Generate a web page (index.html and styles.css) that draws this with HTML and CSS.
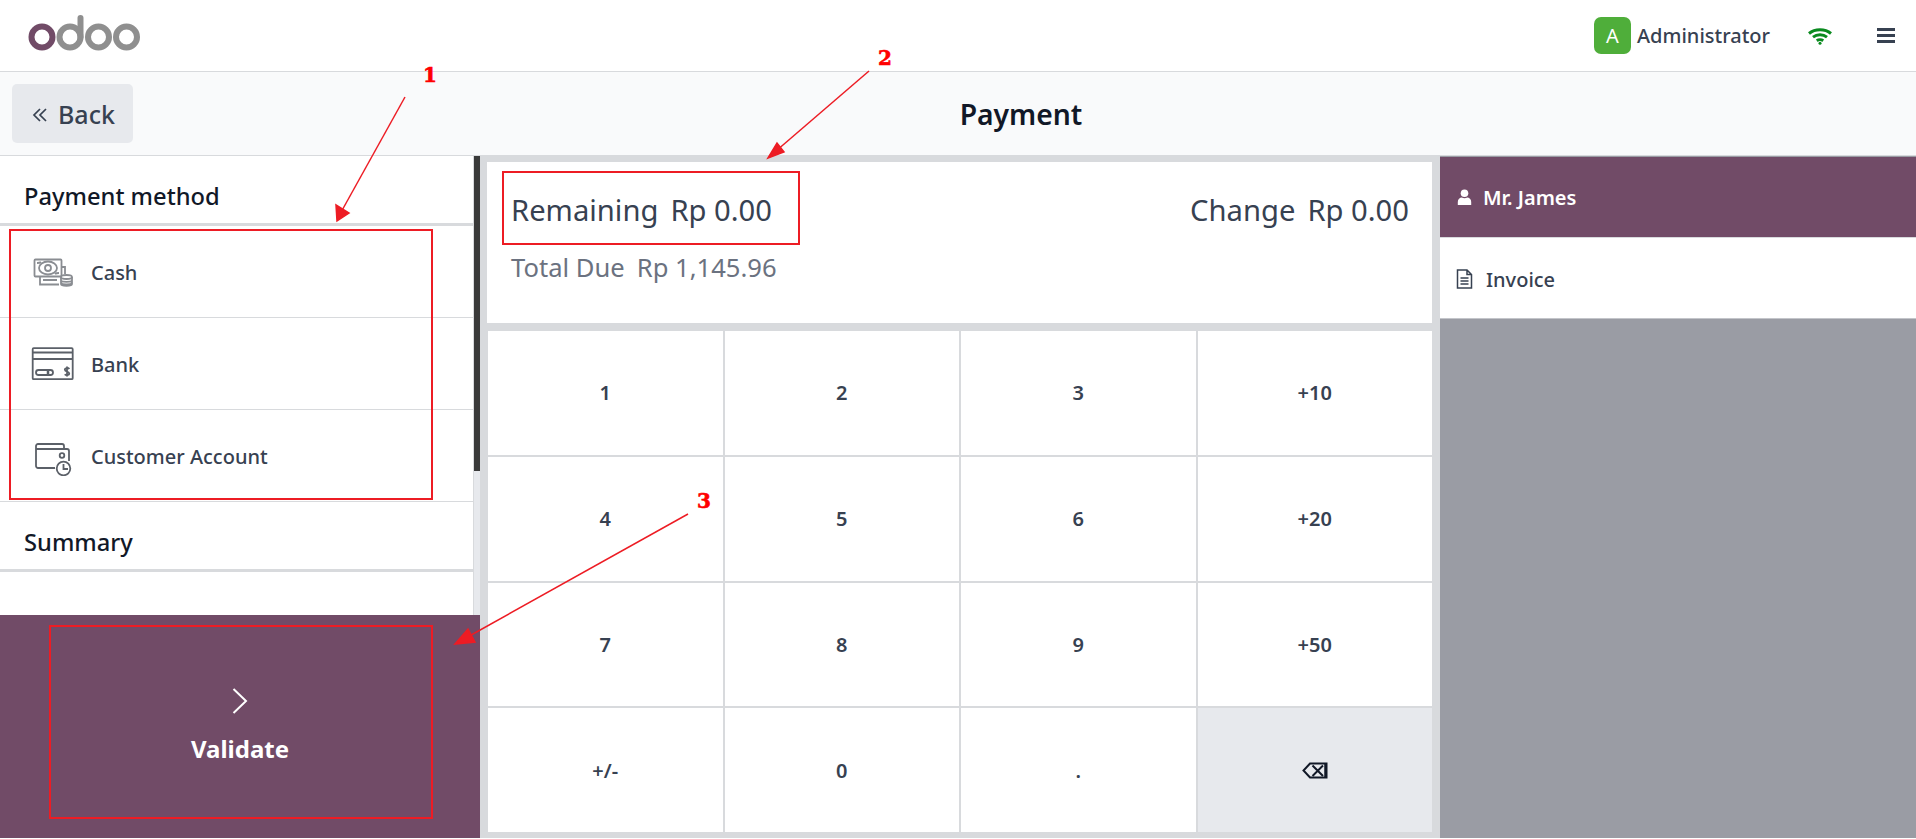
FILE: index.html
```html
<!DOCTYPE html>
<html lang="en">
<head>
<meta charset="utf-8">
<title>Payment</title>
<link rel="stylesheet" href="styles.css">
</head>
<body>
<div class="app">
  <header class="topbar">
    <svg class="logo" width="116" height="38" viewBox="0 0 116 38" fill="none">
      <circle cx="14" cy="22" r="10.5" stroke="#714B67" stroke-width="6"/>
      <circle cx="42" cy="22" r="10.5" stroke="#8f8f8f" stroke-width="6"/>
      <path d="M52.5 3v19" stroke="#8f8f8f" stroke-width="6" stroke-linecap="round"/>
      <circle cx="70.500" cy="22" r="10.500" stroke="#8f8f8f" stroke-width="6"/>
      <circle cx="98.500" cy="22" r="10.500" stroke="#8f8f8f" stroke-width="6"/>
    </svg>
    <div class="top-right">
      <span class="avatar">A</span>
      <span class="user">Administrator</span>
      <svg class="wifi" width="24" height="18" viewBox="0 0 24 18" fill="none" stroke="#0a8a1f" stroke-width="3">
        <path d="M1 6.500C7 1.500 17 1.500 23 6.500"/>
        <path d="M5 10.200C9 7 15 7 19 10.200"/>
        <path d="M8.800 13.800C10.500 12.500 13.500 12.500 15.200 13.800"/>
        <circle cx="12" cy="16.300" r="1.500" fill="#0a8a1f" stroke="none"/>
      </svg>
      <div class="burger"><i></i><i></i><i></i></div>
    </div>
  </header>
  <div class="subbar">
    <button class="back">
      <svg class="back-icon" width="16" height="16" viewBox="0 0 16 16" fill="none" stroke="#374151" stroke-width="1.700"><path d="M8 2 2 8l6 6"/><path d="M14 2 8 8l6 6"/></svg>
      <span>Back</span>
    </button>
    <h1 class="title">Payment</h1>
  </div>
  <main class="main">
    <section class="left">
      <div class="left-scroll">
        <div class="left-content">
          <h2 class="heading">Payment method</h2>
          <div class="method">
            <svg class="micon" width="44" height="34" viewBox="0 0 44 34" fill="none" stroke="#8a8d92" stroke-width="1.800">
              <rect x="3.500" y="4.500" width="27" height="17" rx="1"/>
              <path d="M6 8c3 0 4-1 4-1M28 18c-3 0-4 1-4 1" />
              <ellipse cx="17" cy="13" rx="9" ry="6.500"/>
              <circle cx="17" cy="13" r="3"/>
              <path d="M9 22v7.500h19M12 25h14M30.500 12h3.500v7"/>
              <ellipse cx="35.500" cy="22" rx="5.500" ry="2"/>
              <path d="M30 22v7c0 2.400 11 2.400 11 0v-7M30 25c0 2.400 11 2.400 11 0M30 27.500c0 2.400 11 2.400 11 0"/>
            </svg>
            <span>Cash</span>
          </div>
          <div class="method">
            <svg class="micon" width="44" height="34" viewBox="0 0 44 34" fill="none" stroke="#5b6068" stroke-width="1.800">
              <rect x="1.700" y="1.200" width="40" height="31" rx="1"/>
              <path d="M2 5.500h40M2 12h40" stroke-width="2"/>
              <rect x="5" y="23" width="17" height="5" rx="2.500"/>
              <path d="M17 23v5" stroke-width="2.500"/>
              <path d="M36 19.500v10M38.300 22c-1-1.500-4.500-1.200-4.500.5 0 2.500 4.500 1.700 4.500 4.200 0 1.700-3.500 2-4.500.5"/>
            </svg>
            <span>Bank</span>
          </div>
          <div class="method">
            <svg class="micon" width="44" height="40" viewBox="0 0 44 40" fill="none" stroke="#5b6068" stroke-width="1.800">
              <path d="M24 32H7a2 2 0 0 1-2-2V10a2 2 0 0 1 2-2h24a2 2 0 0 1 2 2v3"/>
              <path d="M5 13h31a2 2 0 0 1 2 2v10"/>
              <circle cx="31" cy="19.500" r="2.300"/>
              <circle cx="32.500" cy="32.500" r="6.800"/>
              <path d="M32.500 28v5h4.500"/>
            </svg>
            <span>Customer Account</span>
          </div>
          <h2 class="heading">Summary</h2>
        </div>
        <div class="scrollbar"><div class="thumb"></div></div>
      </div>
      <button class="validate">
        <svg width="16" height="26" viewBox="0 0 16 26" fill="none" stroke="#fff" stroke-width="2"><path d="M1.500 1 14 13 1.500 25"/></svg>
        <span>Validate</span>
      </button>
    </section>
    <section class="center">
      <div class="status">
        <div class="status-row">
          <div class="big"><span>Remaining</span><span>Rp 0.00</span></div>
          <div class="big"><span>Change</span><span>Rp 0.00</span></div>
        </div>
        <div class="due"><span>Total Due</span><span>Rp 1,145.96</span></div>
      </div>
      <div class="pad">
        <button class="key">1</button><button class="key">2</button><button class="key">3</button><button class="key">+10</button>
        <button class="key">4</button><button class="key">5</button><button class="key">6</button><button class="key">+20</button>
        <button class="key">7</button><button class="key">8</button><button class="key">9</button><button class="key">+50</button>
        <button class="key">+/-</button><button class="key">0</button><button class="key">.</button>
        <button class="key key-back" aria-label="Backspace">
          <svg width="26" height="17" viewBox="0 0 26 17" fill="none" stroke="#111827" stroke-width="2"><path d="M8 1.500H24.500V15.500H8L1.500 8.500z"/><path d="M10.500 3.500 21 14M21 3.500 10.500 14"/><path d="M23.500 1.500v14" stroke-width="2.500"/></svg>
        </button>
      </div>
    </section>
    <aside class="right">
      <div class="customer">
        <svg width="15" height="16" viewBox="0 0 15 16" fill="#fff"><circle cx="7.500" cy="4.200" r="3.800"/><path d="M.8 16v-3c0-3 2-4.500 4-4.500 1.500 1 4 1 5.400 0 2 0 4 1.500 4 4.500v3z"/></svg>
        <span>Mr. James</span>
      </div>
      <div class="invoice">
        <svg width="17" height="20" viewBox="0 0 17 20" fill="none" stroke="#374151" stroke-width="1.500"><path d="M1.500 1h9.500l4.500 4.500V19h-14zM11 1v4.500h4.500M4.500 9h8M4.500 12h8M4.500 15h8"/></svg>
        <span>Invoice</span>
      </div>
    </aside>
  </main>
</div>
<div class="annot-box box-1"></div>
<div class="annot-box box-2"></div>
<div class="annot-box box-3"></div>
<svg class="arrows" width="1916" height="839" viewBox="0 0 1916 839">
  <g stroke="#ed1c24" stroke-width="1.500" fill="#ed1c24">
    <path d="M405 97 340 214"/><path d="M337 221 336 205 349 213z"/>
    <path d="M869 71 776 151"/><path d="M768 158 777 143 784 152z"/>
    <path d="M688 514 464 639"/><path d="M455 644 468 629 475 642z"/>
  </g>
</svg>
<span class="annot-num num-1">1</span>
<span class="annot-num num-2">2</span>
<span class="annot-num num-3">3</span>
</body>
</html>
```
FILE: styles.css
```css
* { box-sizing: border-box; }
html, body { margin: 0; height: 100%; overflow: hidden; }
body { font-family: "Noto Sans", sans-serif; color: #374151; background: #fff; }
button { font-family: inherit; border: 0; cursor: pointer; }
.app { display: flex; flex-direction: column; height: 838px; }

.topbar { flex: 0 0 72px; display: flex; align-items: center; justify-content: space-between; padding: 0 21px 0 28px; background: #fff; border-bottom: 1px solid #d8dadd; }
.logo { display: block; margin-top: -3px; }
.top-right { display: flex; align-items: center; }
.avatar { width: 37px; height: 37px; border-radius: 7px; background: #4fae3a; color: #fff; font-size: 20px; display: flex; align-items: center; justify-content: center; }
.user { margin-left: 6px; font-size: 20px; font-weight: 500; }
.wifi { margin-left: 38px; }
.burger { margin-left: 45px; width: 18px; display: flex; flex-direction: column; gap: 3px; }
.burger i { display: block; height: 3px; background: #374151; }

.subbar { flex: 0 0 84px; display: flex; align-items: center; padding: 0 7px 0 12px; background: #f9fafb; border-bottom: 1px solid #d8dadd; }
.back { flex: 0 0 121px; height: 59px; border-radius: 5px; background: #e7e9ed; color: #374151; font-size: 25px; font-weight: 500; display: flex; align-items: center; gap: 10px; padding: 0 0 0 20px; }
.back-icon { margin-top: 2px; }
.title { flex: 1; margin: 0; text-align: center; font-size: 28.3px; font-weight: 600; color: #111827; }

.main { flex: 1; display: flex; min-height: 0; background: #d8dadd; }
.left { flex: 0 0 480px; display: flex; flex-direction: column; background: #fff; }
.left-scroll { flex: 1; display: flex; min-height: 0; overflow: hidden; }
.left-content { flex: 1; min-width: 0; border-right: 1px solid #d8dadd; }
.scrollbar { flex: 0 0 6px; background: #e7e9ed; }
.thumb { height: 315px; background: #3a3a3a; }

.heading { margin: 0; height: 70px; padding: 12px 0 0 24px; display: flex; align-items: center; font-size: 23.7px; font-weight: 500; color: #111827; border-bottom: 3px solid #d8dadd; }
.method { height: 92px; display: flex; align-items: center; padding-left: 31px; gap: 16px; font-size: 20px; font-weight: 500; border-bottom: 1px solid #d8dadd; }
.method span { margin-top: 2px; }
.micon { flex: 0 0 44px; }

.validate { flex: 0 0 223px; background: #714B67; color: #fff; display: flex; flex-direction: column; align-items: center; justify-content: center; gap: 18px; font-size: 24px; font-weight: 700; padding: 0; }

.center { flex: 1; min-width: 0; display: flex; flex-direction: column; padding: 6px 8px 6px 7px; gap: 8px; }
.status { flex: 0 0 161px; background: #fff; padding: 28px 23px 0 24px; }
.status-row { display: flex; justify-content: space-between; }
.big { display: flex; gap: 12px; font-size: 29.2px; color: #374151; line-height: 40px; }
.due { display: flex; gap: 12px; font-size: 25.6px; color: #6b7280; line-height: 34px; margin-top: 21px; }
.pad { flex: 1; display: grid; grid-template-columns: repeat(4, 1fr); grid-template-rows: repeat(4, 1fr); gap: 2px; min-height: 0; margin-left: 1px; }
.key { background: #fff; color: #374151; font-size: 20px; font-weight: 600; padding: 0; }
.key-back { background: #e7e9ed; display: flex; align-items: center; justify-content: center; }

.right { flex: 0 0 476px; display: flex; flex-direction: column; background: #9a9ca4; padding-top: 1px; }
.customer, .invoice { height: 81px; display: flex; align-items: center; font-size: 20px; font-weight: 500; }
.customer { background: #714B67; color: #fff; gap: 11px; padding-left: 17px; font-weight: 600; border-bottom: 1px solid #d8dadd; }
.invoice { background: #fff; gap: 13px; padding: 2px 0 0 16px; border-bottom: 1px solid #c3c5ca; }

.annot-box { position: absolute; border: 2px solid #ed1c24; }
.box-1 { left: 9px; top: 229px; width: 424px; height: 271px; }
.box-2 { left: 502px; top: 171px; width: 298px; height: 74px; }
.box-3 { left: 49px; top: 625px; width: 384px; height: 194px; }
.arrows { position: absolute; left: 0; top: 0; pointer-events: none; }
.annot-num { position: absolute; color: #f00; font-family: "DejaVu Serif", serif; font-weight: 700; font-size: 20px; line-height: 1; -webkit-text-stroke: 0.6px #f00; }
.num-1 { left: 423px; top: 65px; }
.num-2 { left: 878px; top: 48px; }
.num-3 { left: 697px; top: 491px; }
```
